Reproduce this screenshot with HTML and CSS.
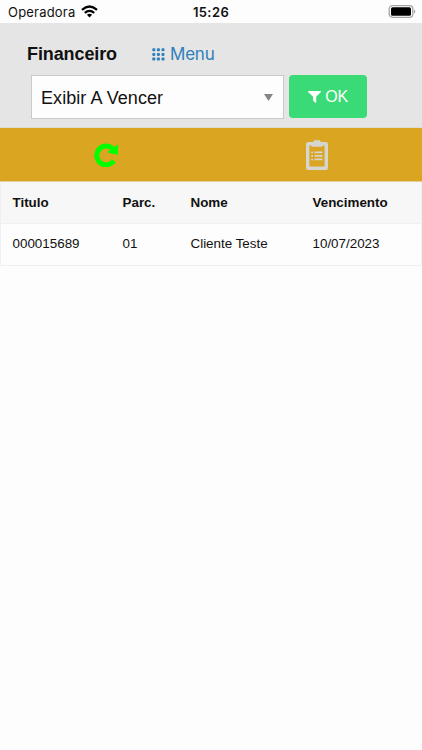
FILE: index.html
```html
<!DOCTYPE html>
<html lang="pt-BR">
<head>
<meta charset="utf-8">
<title>Financeiro</title>
<link rel="stylesheet" href="styles.css">
</head>
<body>
<div class="status">
  <div class="carrier"><span>Operadora</span>
    <svg class="wifi" width="17" height="13" viewBox="0 0 17 13"><g fill="none" stroke="#000" stroke-width="2.3"><path d="M1 4.8Q8.500-1.800 16 4.800"/><path d="M3.800 7.800Q8.500 3.900 13.200 7.800"/></g><path d="M5.900 9.800Q8.500 7.800 11.100 9.800L8.500 12.400Z"/></svg>
  </div>
  <div class="clock">15:26</div>
  <div class="power">
    <svg width="28" height="13" viewBox="0 0 28 13"><rect x="1.200" y=".7" width="23.600" height="11.600" rx="3.300" fill="#fff" stroke="#a4a4a4" stroke-width="1.300"/><rect x="3" y="2.300" width="20" height="8.500" rx="1.600"/><path d="M26 4.500q1.300.5 1.300 2t-1.300 2z" fill="#a4a4a4"/></svg>
  </div>
</div>
<header class="header">
  <div class="heading">
    <h1>Financeiro</h1>
    <a class="menu"><svg width="13" height="13" viewBox="0 0 13 13" fill="#2f80bb"><g id="dots"><rect x=".3" y=".3" width="3" height="3" rx=".8"/><rect x="4.900" y=".3" width="3" height="3" rx=".8"/><rect x="9.500" y=".3" width="3" height="3" rx=".8"/></g><use href="#dots" y="4.600"/><use href="#dots" y="9.200"/></svg><span>Menu</span></a>
  </div>
  <div class="filter">
    <div class="select"><span>Exibir A Vencer</span><svg width="9" height="7" viewBox="0 0 9 7"><path d="M0 0h9L4.500 7z" fill="#858585"/></svg></div>
    <button class="ok"><svg width="13" height="12" viewBox="0 0 13 12"><path d="M.4 0h12.200q.6.500.1 1.200L8.200 5.800v5.600q-.2.700-.8.300L5.100 9.700V5.800L.3 1.200Q-.2.500.4 0z" fill="#fff"/></svg><span>OK</span></button>
  </div>
</header>
<nav class="toolbar">
  <div class="tool"><svg width="24" height="24" viewBox="0 0 24 24"><path d="M18.500 5.500A9.400 9.400 0 1 0 19.900 17.800" fill="none" stroke="#0f0" stroke-width="5"/><path d="M24 2.300v8.500q0 1.100-1 1l-8.500-2q-1.100-.5-.3-1.400L22.700 1.900q1-.6 1.300.4z" fill="#0f0"/></svg></div>
  <div class="tool"><svg width="22" height="30" viewBox="0 0 22 30"><rect x="1.700" y="3.700" width="18.600" height="24.600" rx=".5" fill="none" stroke="#d7d5cf" stroke-width="3.400"/><path d="M5.500 3h2V1.200Q7.500.2 8.500.2h5q1 0 1 1V3h2v3.800h-11z" fill="#d7d5cf"/><g fill="#d7d5cf"><circle cx="6.100" cy="12.400" r="1"/><circle cx="6.100" cy="16" r="1"/><circle cx="6.100" cy="19.500" r="1"/><path d="M8.500 11.500h7.900v1.700H8.500zM8.500 15.100h7.900v1.700H8.500zM8.500 18.600h7.900v1.700H8.500z"/></g></svg></div>
</nav>
<table class="titles">
  <thead><tr><th class="c1">Titulo</th><th class="c2">Parc.</th><th class="c3">Nome</th><th>Vencimento</th></tr></thead>
  <tbody><tr><td>000015689</td><td>01</td><td>Cliente Teste</td><td>10/07/2023</td></tr></tbody>
</table>
</body>
</html>
```
FILE: styles.css
```css
* { box-sizing: border-box; }
body { margin: 0; min-height: 750px; background: #fdfdfd; color: #111; font-family: "Liberation Sans", sans-serif; }
svg { display: block; flex: none; }
.status { display: grid; grid-template-columns: 1fr auto 1fr; align-items: center; height: 23px; padding: 0 6px 0 8px; background: #fdfdfd; font-family: Inter, sans-serif; font-size: 13px; }
.carrier { display: flex; align-items: center; gap: 6px; letter-spacing: .2px; }
.carrier span { width: 67px; white-space: nowrap; }
.clock { margin-right: 2px; font-weight: 600; font-size: 13px; letter-spacing: .4px; }
.power { display: flex; justify-content: flex-end; }
.header { height: 105px; padding-top: 15px; background: #e5e5e5; border-bottom: 1px solid #dedbd2; }
.heading { display: flex; align-items: center; height: 32px; padding-left: 27px; }
.heading h1 { width: 125px; margin: 0; font-size: 18px; line-height: 32px; letter-spacing: -.1px; }
.menu { display: flex; align-items: center; gap: 5px; color: #2f80bb; font: 17px/32px Inter, sans-serif; letter-spacing: -.2px; }
.filter { display: flex; gap: 5px; margin-top: 5px; padding-left: 31px; }
.select { display: flex; align-items: center; justify-content: space-between; width: 253px; height: 44px; padding: 0 10px 0 9px; border: 1px solid #c9c9c9; background: #fdfdfd; font-size: 18px; letter-spacing: .07px; }
.select span { padding-top: 2px; }
.ok { display: flex; align-items: center; justify-content: center; gap: 4px; width: 78px; height: 43px; padding: 0; border: 0; border-radius: 4px; background: #3adb76; color: #fff; font: 300 16px "Liberation Sans", sans-serif; letter-spacing: -.3px; }
.toolbar { display: grid; grid-template-columns: 1fr 1fr; height: 54px; background: #daa520; border-bottom: 1px solid #e2cf9c; }
.tool { display: flex; align-items: center; justify-content: center; padding-top: 1px; }
.titles { width: 422px; border-collapse: separate; border-spacing: 0; table-layout: fixed; border: 1px solid #f0f0f0; border-top: 0; font-size: 13.400px; }
.titles th, .titles td { padding: 0 0 0 11.500px; text-align: left; white-space: nowrap; }
.titles th { height: 42px; padding-bottom: 1px; background: #f7f7f7; border-bottom: 1px solid #f0f0f0; }
.titles td { height: 41px; padding-bottom: 2px; background: #fdfdfd; }
.c1 { width: 110px; }
.c2 { width: 68px; }
.c3 { width: 122px; }
```
